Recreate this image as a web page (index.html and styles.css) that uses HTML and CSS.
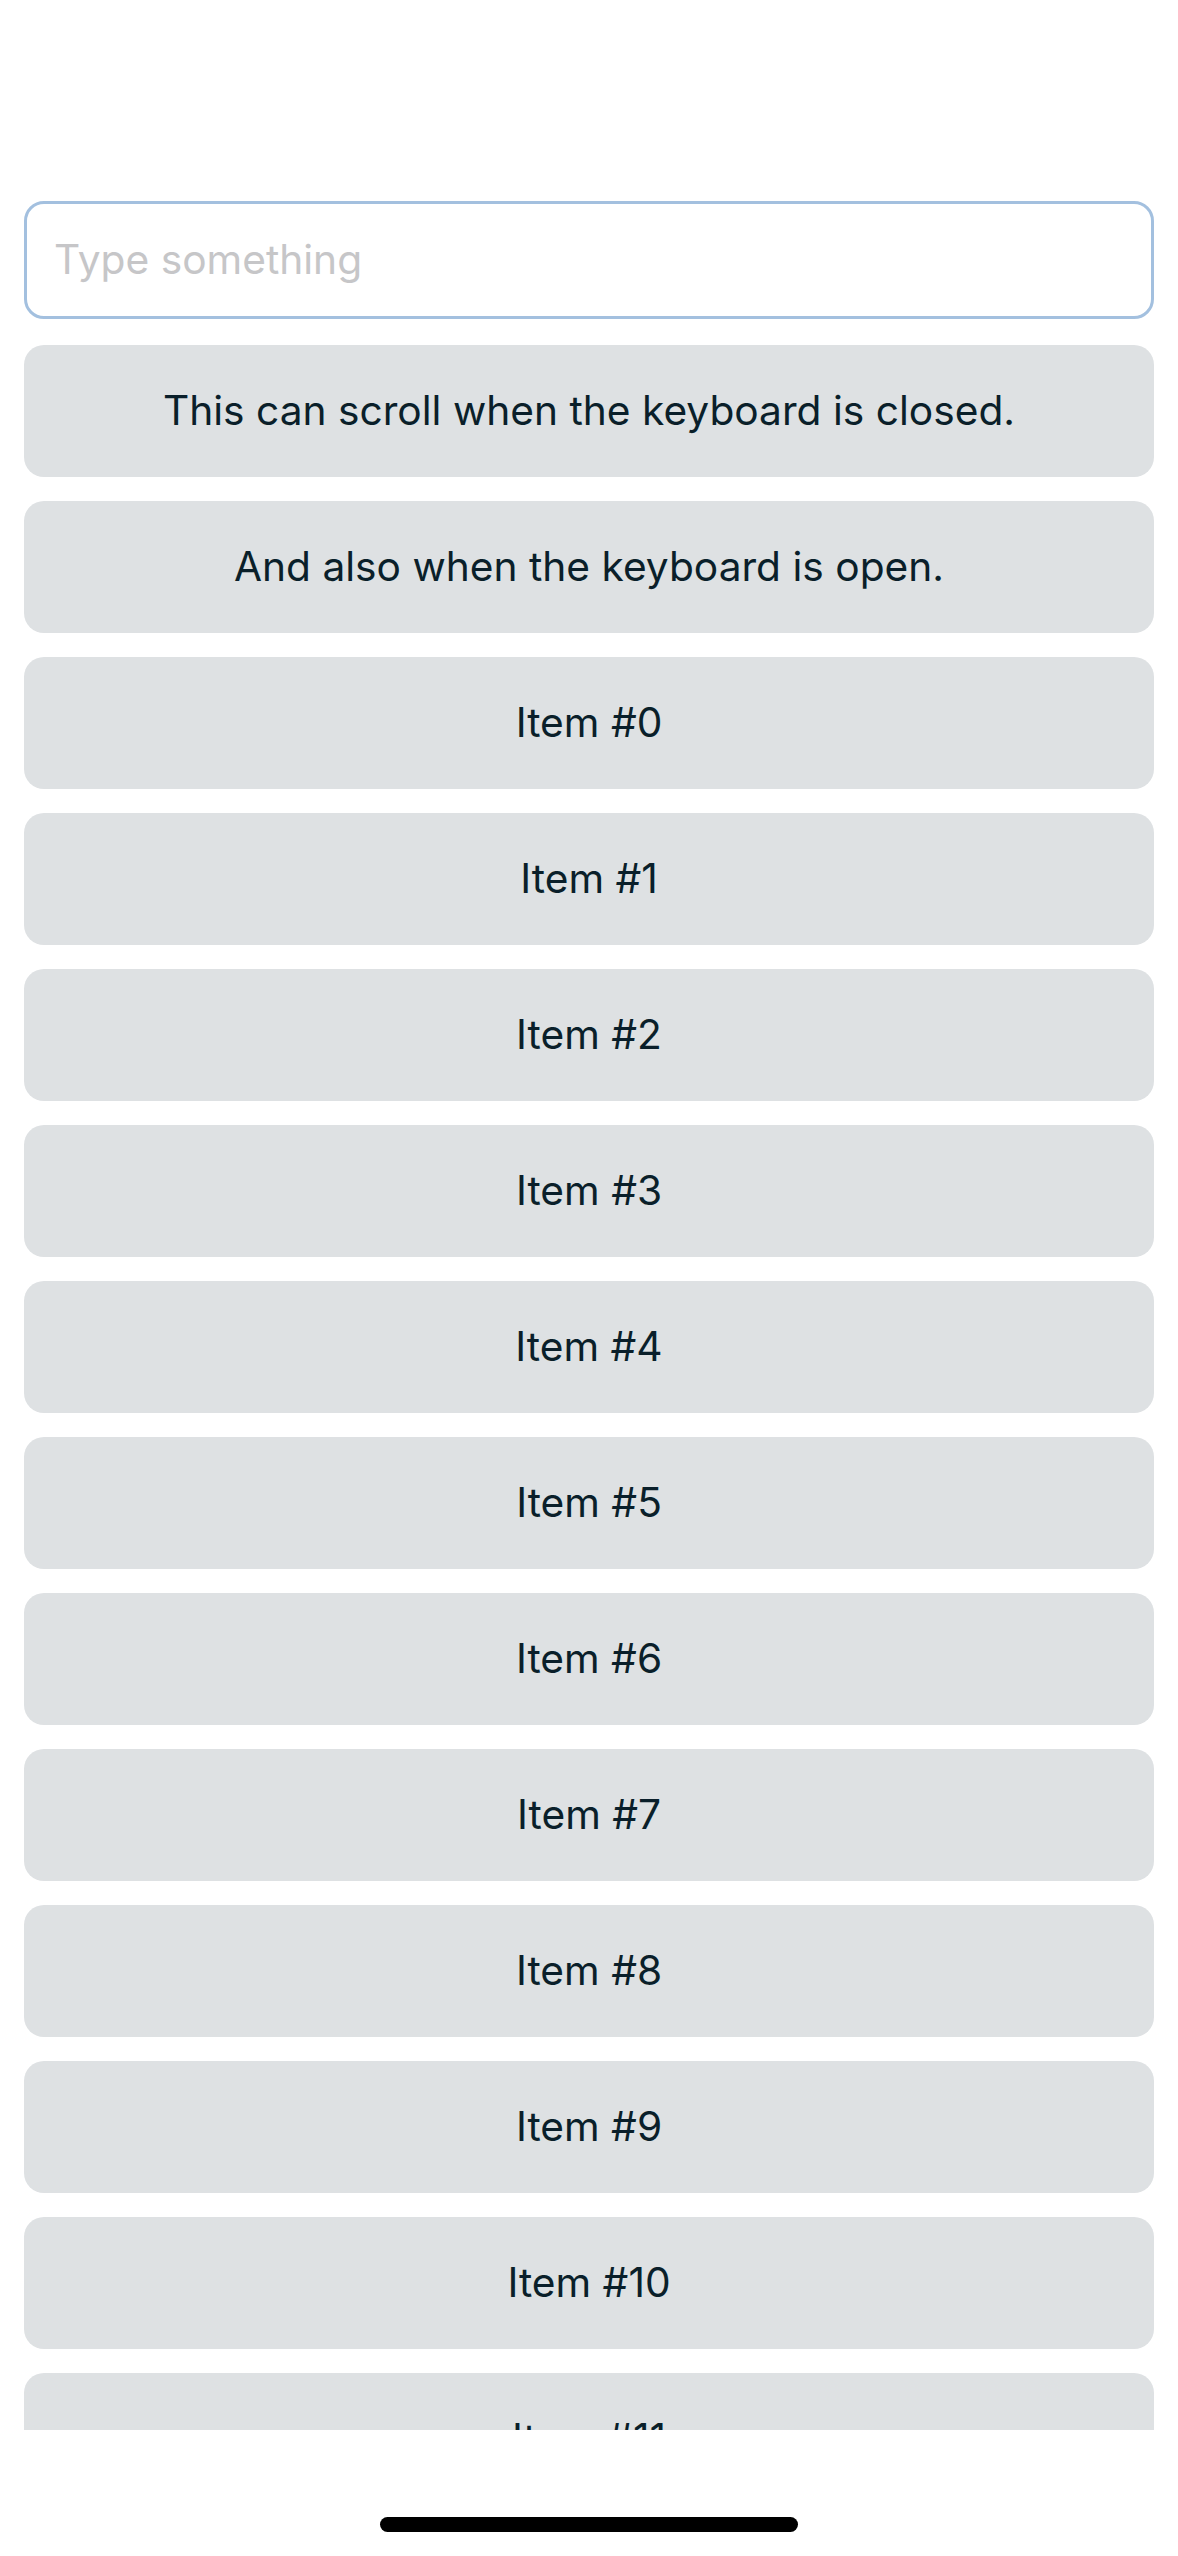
FILE: index.html
```html
<!DOCTYPE html>
<html>
<head>
<meta charset="utf-8">
<link rel="stylesheet" href="styles.css">
</head>
<body>
<div class="screen">
  <div class="scroll">
    <div class="field"><span class="placeholder">Type something</span></div>
    <div class="list">
      <div class="item">This can scroll when the keyboard is closed.</div>
      <div class="item">And also when the keyboard is open.</div>
      <div class="item">Item #0</div>
      <div class="item">Item #1</div>
      <div class="item">Item #2</div>
      <div class="item">Item #3</div>
      <div class="item">Item #4</div>
      <div class="item">Item #5</div>
      <div class="item">Item #6</div>
      <div class="item">Item #7</div>
      <div class="item">Item #8</div>
      <div class="item">Item #9</div>
      <div class="item">Item #10</div>
      <div class="item">Item #11</div>
    </div>
  </div>
  <div class="home"><div class="indicator"></div></div>
</div>
</body>
</html>
```
FILE: styles.css
```css
html, body {
  margin: 0;
  padding: 0;
  background: #ffffff;
}
.screen {
  width: 1178px;
  height: 2556px;
  display: flex;
  flex-direction: column;
  overflow: hidden;
  font-family: Inter, "Noto Sans", "Liberation Sans", sans-serif;
}
.scroll {
  height: 2430px;
  overflow: hidden;
  padding: 201px 24px 0 24px;
  box-sizing: border-box;
  flex: none;
}
.field {
  height: 118px;
  box-sizing: border-box;
  border: 3px solid #a3c0df;
  border-radius: 20px;
  display: flex;
  align-items: center;
  padding-left: 27px;
  margin-bottom: 26px;
}
.placeholder {
  font-size: 40.7px;
  color: #c6c6c8;
  margin-top: -2px;
}
.list {
  display: flex;
  flex-direction: column;
  gap: 24px;
}
.item {
  height: 132px;
  flex: none;
  background: #dee1e3;
  border-radius: 20px;
  display: flex;
  align-items: center;
  justify-content: center;
  font-size: 40.7px;
  color: #0a1f2a;
  padding-bottom: 2px;
  box-sizing: border-box;
}
.home {
  flex: 1;
  display: flex;
  justify-content: center;
  padding-top: 87px;
}
.indicator {
  width: 418px;
  height: 15px;
  border-radius: 8px;
  background: #000000;
}
```
